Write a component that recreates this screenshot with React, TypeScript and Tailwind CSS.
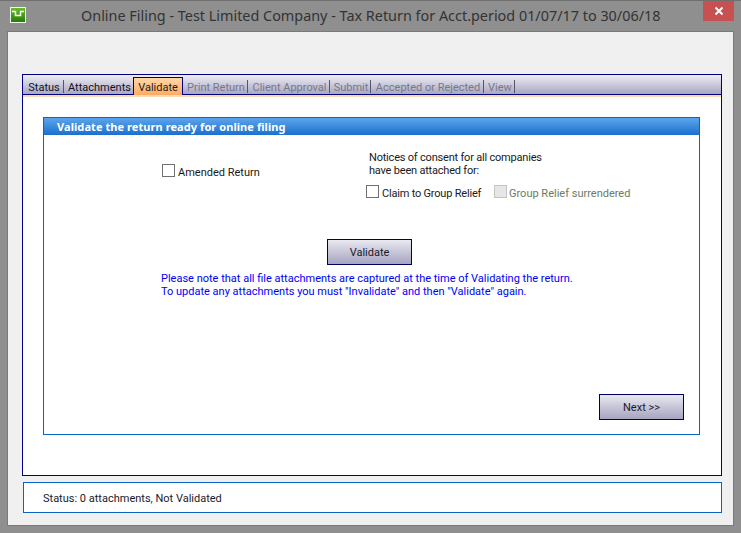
import React from "react";

const font = "font-['Roboto','Noto_Sans',sans-serif]";

const tabs = [
  { label: "Status", width: "w-[41px]", enabled: true },
  { label: "Attachments", width: "w-[69px]", enabled: true, noDivider: true },
  { label: "Validate", width: "w-[50px]", active: true },
  { label: "Print Return", width: "w-[65px]" },
  { label: "Client Approval", width: "w-[82px]" },
  { label: "Submit", width: "w-[41px]" },
  { label: "Accepted or Rejected", width: "w-[113px]" },
  { label: "View", width: "w-[31px]" },
];

const Tab: React.FC<{
  label: string;
  width: string;
  enabled?: boolean;
  active?: boolean;
  noDivider?: boolean;
}> = ({ label, width, enabled, active, noDivider }) => {
  if (active) {
    return (
      <div
        className={`${width} h-[19px] mt-[2px] flex items-center justify-center border border-b-0 border-[#000080] bg-gradient-to-b from-[#ffd7a8] to-[#ffa85c] text-[#1c1c1c] whitespace-nowrap`}
      >
        {label}
      </div>
    );
  }
  return (
    <div className={`${width} h-[19px] flex items-center whitespace-nowrap`}>
      <span
        className={`flex-1 text-center pl-[2px] pt-[5px] ${enabled ? "text-[#111122]" : "text-[#77778a]"}`}
      >
        {label}
      </span>
      {!noDivider && <span className="w-[1px] h-[13px] mt-[3px] bg-[#55556f]" />}
    </div>
  );
};

const Check: React.FC<{ disabled?: boolean }> = ({ disabled }) => (
  <span
    className={`block w-[13px] h-[13px] border ${
      disabled ? "border-[#c4c4c4] bg-[#e6e6e6]" : "border-[#707070] bg-white"
    }`}
  />
);

const Button: React.FC<{ label: string }> = ({ label }) => (
  <button className="block w-[85px] h-[26px] border border-[#000060] bg-gradient-to-b from-[#e9e9f0] to-[#a6a4c0] text-[#1a1a2a] text-[11px]">
    {label}
  </button>
);

export default function App() {
  return (
    <div className={`${font} w-[741px] h-[533px] bg-[#8f8f8f] border-t border-[#6f6f6f] flex flex-col text-[11px] leading-[13px] overflow-hidden`}>
      <div className="h-[30px] shrink-0 flex items-center relative">
        <svg className="ml-[10px] mb-[2px]" width="16" height="16" viewBox="0 0 16 16">
          <defs>
            <linearGradient id="appIcon" x1="0" y1="0" x2="0" y2="1">
              <stop offset="0" stopColor="#6cc02c" />
              <stop offset="1" stopColor="#1f7a08" />
            </linearGradient>
          </defs>
          <rect x="0.5" y="0.5" width="15" height="15" fill="url(#appIcon)" stroke="#eef4ea" />
          <path d="M2 4.5h3.5v4h5v-4H14" fill="none" stroke="#ffffff" strokeWidth="1.5" />
        </svg>
        <span className="ml-[55px] mb-[1px] font-['Noto_Sans',sans-serif] text-[14.4px] leading-[20px] text-[#333333] whitespace-nowrap">
          Online Filing - Test Limited Company - Tax Return for Acct.period 01/07/17 to 30/06/18
        </span>
        <div className="absolute right-[7px] top-0 w-[31px] h-[20px] bg-[#c75050] flex items-center justify-center">
          <svg width="10" height="10" viewBox="0 0 10 10">
            <path d="M1.5 1.5l7 7M8.5 1.5l-7 7" stroke="#ffffff" strokeWidth="2" />
          </svg>
        </div>
      </div>

      <div className="mx-[7px] w-[727px] h-[495px] border border-[#7a7a7a] bg-[#f0f0f0] pl-[14px] pt-[42px]">
        <div className="w-[700px] h-[402px] border border-[#000080] bg-white flex flex-col">
          <div className="h-[20px] shrink-0 flex bg-gradient-to-b from-[#eeeef4] to-[#a9a7c2] border-b border-[#000080]">
            {tabs.map((t) => (
              <Tab key={t.label} {...t} />
            ))}
          </div>
          <div className="h-[2px] shrink-0 bg-[#ffd9b0]" />
          <div className="ml-[20px] mt-[20px] w-[657px] h-[318px] border border-[#0a64c8] flex flex-col">
            <div className="h-[17px] shrink-0 pl-[13px] flex items-center bg-gradient-to-b from-[#5aa5ec] to-[#1a6fd0] text-white font-['Noto_Sans',sans-serif] font-bold tracking-[0.07px] text-[11px]">
              Validate the return ready for online filing
            </div>
            <div className="flex-1 flex flex-col">
              <div className="flex pt-[16px] text-[#1a1a1a]">
                <div className="ml-[118px] w-[204px] pt-[13px] flex items-center h-[26px]">
                  <Check />
                  <span className="ml-[3px] mt-[4px]">Amended Return</span>
                </div>
                <div className="ml-[3px]">
                  <div className="tracking-[-0.2px]">Notices of consent for all companies</div>
                  <div className="tracking-[-0.2px]">have been attached for:</div>
                  <div className="-ml-[3px] mt-[6px] flex items-center">
                    <Check />
                    <span className="ml-[3px] pt-[4px] w-[112px] tracking-[-0.2px]">Claim to Group Relief</span>
                    <Check disabled />
                    <span className="ml-[2px] pt-[4px] text-[#6d7a5f]">Group Relief surrendered</span>
                  </div>
                </div>
              </div>
              <div className="mt-[39px] ml-[283px]">
                <Button label="Validate" />
              </div>
              <div className="ml-[117px] mt-[7px] text-[#0000ff]">
                <div>Please note that all file attachments are captured at the time of Validating the return.</div>
                <div>To update any attachments you must "Invalidate" and then "Validate" again.</div>
              </div>
              <div className="mt-auto mb-[14px] ml-[555px]">
                <Button label="Next >>" />
              </div>
            </div>
          </div>
        </div>
        <div className="mt-[6px] ml-[1px] w-[699px] h-[31px] border border-[#0a64c8] bg-white flex items-center pl-[19px] pt-[1px] text-[#1a1a2a]">
          Status: 0 attachments, Not Validated
        </div>
      </div>
    </div>
  );
}
